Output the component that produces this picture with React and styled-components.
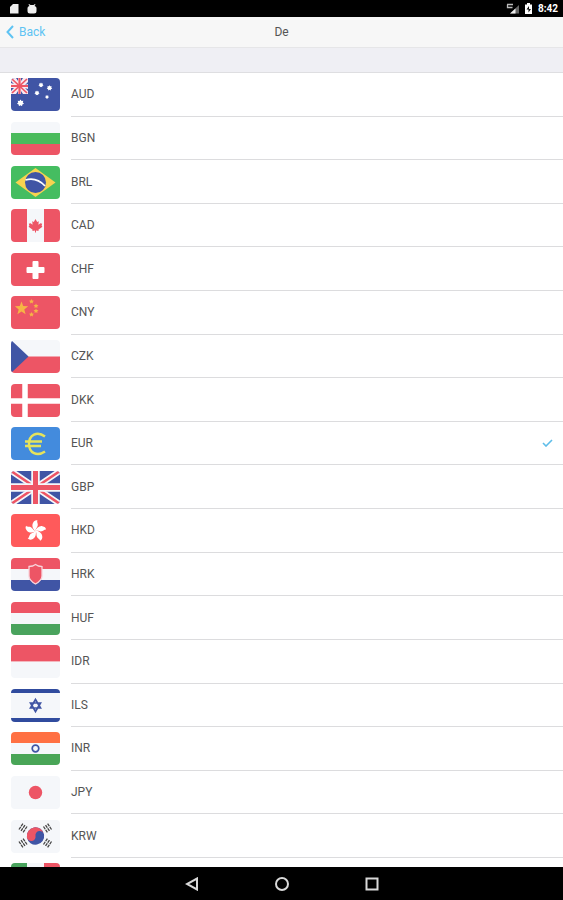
import { useId, useState } from "react";
import styled, { createGlobalStyle } from "styled-components";

const RED = "#ed5565";
const BLUE = "#4055a5";
const WHITE = "#f5f7fa";

const star = (cx, cy, r, inner = 0.42, points = 5) =>
	Array.from({ length: points * 2 }, (_, i) => {
		const radius = i % 2 ? r * inner : r;
		const angle = (Math.PI * i) / points - Math.PI / 2;
		return `${(cx + radius * Math.cos(angle)).toFixed(2)},${(
			cy +
			radius * Math.sin(angle)
		).toFixed(2)}`;
	}).join(" ");

const Stripes = ({ colors }) =>
	colors.map((color, i) => (
		<rect
			key={i}
			y={(33 / colors.length) * i}
			width='49'
			height={33 / colors.length + 0.3}
			fill={color}
		/>
	));

const artwork = {
	AUD: (
		<>
			<rect width='49' height='33' fill={BLUE} />
			<rect width='17' height='16' fill='#f8e8f0' />
			<path d='M5 0h2v3zM10 0h2l-2 3zM0 5v-2l3 3zM17 4v2l-3 1zM0 10l3 0-3 3zM17 11v2l-3-3zM5 16l2-3v3zM10 13l2 3h-2z' fill={BLUE} />
			<path d='M8.500 0v16M0 8h17' stroke={RED} strokeWidth='2.200' />
			<path d='M1 1l15 14M16 1L1 15' stroke={RED} strokeWidth='1.700' />
			<g fill='#fff'>
				<polygon points={star(9.5, 25, 3.6, 0.65, 7)} />
				<polygon points={star(30, 7, 2.6, 0.65, 7)} />
				<polygon points={star(38.5, 10, 2.8, 0.65, 7)} />
				<polygon points={star(26, 15, 2.6, 0.65, 7)} />
				<polygon points={star(36, 19, 2, 0.65, 7)} />
			</g>
		</>
	),
	BGN: <Stripes colors={[WHITE, "#4abb5c", RED]} />,
	BRL: (
		<>
			<rect width='49' height='33' fill='#45bd61' />
			<path d='M24.500 2L44.500 16.500 24.500 31 4.500 16.500z' fill='#f8d350' />
			<circle cx='24.5' cy='16.500' r='10.500' fill={BLUE} />
			<path d='M14.500 14c7-2 14 0 19.500 6' fill='none' stroke='#fff' strokeWidth='1.800' />
		</>
	),
	CAD: (
		<>
			<rect width='49' height='33' fill={WHITE} />
			<path d='M0 0h16v33H0zM33 0h16v33H33z' fill={RED} />
			<path d='M24.500 10l1.700 3 1.600-.7-.4 3.500 2-1.500 1.800.5-.6 2 .8 1-4 3 .2 1.200-2.600-.4v2h-1v-2l-2.600.4.200-1.200-4-3 .8-1-.6-2 1.800-.5 2 1.500-.4-3.500 1.600.7z' fill={RED} />
		</>
	),
	CHF: (
		<>
			<rect width='49' height='33' fill={RED} />
			<path d='M22.500 8h4q1 0 1 1v5h5q1 0 1 1v4q0 1-1 1h-5v5q0 1-1 1h-4q-1 0-1-1v-5h-5q-1 0-1-1v-4q0-1 1-1h5v-5q0-1 1-1z' fill='#fff' />
		</>
	),
	CNY: (
		<>
			<rect width='49' height='33' fill={RED} />
			<g fill='#f6b445'>
				<polygon points={star(10.5, 12.5, 7)} />
				<polygon points={star(20.5, 5.5, 2.6, 0.5)} />
				<polygon points={star(25, 10, 2.6, 0.5)} />
				<polygon points={star(25, 15, 2.6, 0.5)} />
				<polygon points={star(20.5, 18.5, 2.6, 0.5)} />
			</g>
		</>
	),
	CZK: (
		<>
			<Stripes colors={[WHITE, RED]} />
			<path d='M0 0l17.500 16.500L0 33z' fill={BLUE} />
		</>
	),
	DKK: (
		<>
			<rect width='49' height='33' fill={RED} />
			<path d='M14 0v33M0 17h49' stroke='#fff' strokeWidth='5.500' />
		</>
	),
	EUR: (
		<>
			<rect width='49' height='33' fill='#438bdd' />
			<path
				d='M34 9.500C26 3.500 18 8 18 17s8 13 16 7.500M14 14.500h17M14 19h16'
				fill='none'
				stroke='#e6e35b'
				strokeWidth='2.400'
			/>
		</>
	),
	GBP: (
		<>
			<rect width='49' height='33' fill={BLUE} />
			<path d='M0 0l49 33M49 0L0 33' stroke={WHITE} strokeWidth='6' />
			<path d='M0 0l49 33M49 0L0 33' stroke={RED} strokeWidth='2.500' />
			<path d='M24.500 0v33M0 16.500h49' stroke={WHITE} strokeWidth='8.500' />
			<path d='M24.500 0v33M0 16.500h49' stroke={RED} strokeWidth='5' />
		</>
	),
	HKD: (
		<>
			<rect width='49' height='33' fill='#ff5a5b' />
			{[0, 72, 144, 216, 288].map((angle) => (
				<path
					key={angle}
					transform={`rotate(${angle} 24.5 17)`}
					d='M24.500 17.500c-2.500-2.500-4-5.500-2.500-8.500 1-2 2.500-3 4.500-2.500-1 1.500.5 2.500.3 4.500-.2 2.500-2.300 3-2.300 6.500z'
					fill='#fff'
				/>
			))}
		</>
	),
	HRK: (
		<>
			<Stripes colors={[RED, WHITE, BLUE]} />
			<path
				d='M18 8.500l3.500-.5 3-1.500 3 1.500 3.500.5v9.500c0 4-3 6-6.500 8-3.500-2-6.500-4-6.500-8z'
				fill={RED}
				stroke='#f7d5dc'
				strokeWidth='1.300'
			/>
		</>
	),
	HUF: <Stripes colors={[RED, WHITE, "#49a35d"]} />,
	IDR: <Stripes colors={[RED, WHITE]} />,
	ILS: (
		<>
			<rect width='49' height='33' fill={WHITE} />
			<path d='M0 0h49v4H0zM0 29h49v4H0z' fill='#304b9e' />
			<path
				d='M24.500 10.500l5 8.500h-10zM24.500 22.500l5-8.500h-10z'
				fill='none'
				stroke={BLUE}
				strokeWidth='1.700'
			/>
		</>
	),
	INR: (
		<>
			<Stripes colors={["#ff7043", WHITE, "#49a557"]} />
			<circle cx='24.500' cy='16.500' r='3.300' fill='none' stroke={BLUE} strokeWidth='1.700' />
		</>
	),
	JPY: (
		<>
			<rect width='49' height='33' fill={WHITE} />
			<circle cx='24.500' cy='16.500' r='6.700' fill={RED} />
		</>
	),
	KRW: (
		<>
			<rect width='49' height='33' fill={WHITE} />
			<g transform='rotate(-10 24.5 16)'>
				<circle cx='24.500' cy='16' r='8.700' fill={BLUE} />
				<path d='M33.200 16a8.700 8.700 0 0 0-17.400 0 4.350 4.350 0 0 0 8.700 0 4.350 4.350 0 0 1 8.700 0z' fill={RED} />
			</g>
			{[
				[12, 8, -56],
				[36.5, 8, 56],
				[12, 23, 56],
				[36.5, 23, -56]
			].map(([x, y, angle]) => (
				<g key={`${x}-${y}`} transform={`translate(${x} ${y}) rotate(${angle})`}>
					<path d='M-3.500-2.500h7M-3.500 0h7M-3.500 2.500h7' stroke='#444' strokeWidth='1.300' />
					<path d='M0-3.500v7' stroke={WHITE} strokeWidth='.8' />
				</g>
			))}
		</>
	),
	MXN: (
		<>
			<rect width='49' height='33' fill={WHITE} />
			<path d='M0 0h16v33H0z' fill='#49a35d' />
			<path d='M33 0h16v33H33z' fill={RED} />
		</>
	)
};

const currencies = Object.keys(artwork).filter((code) => code !== "MXN");

const Flag = ({ code }) => {
	const id = useId();

	return (
		<FlagIcon viewBox='0 0 49 33' aria-hidden='true'>
			<clipPath id={id}>
				<rect width='49' height='33' rx='4' />
			</clipPath>
			<g clipPath={`url(#${id})`}>{artwork[code]}</g>
		</FlagIcon>
	);
};

const App = () => {
	const [selected, setSelected] = useState("EUR");

	return (
		<Screen>
			<GlobalStyle />
			<StatusBar>
				<svg width='32' height='12' viewBox='0 0 32 12' fill='#eee'>
					<path d='M4 1h5.500v9.500H1V4z' />
					<path d='M20 1l1.500 1h3L26 1l.5.500-1 1.500q2 .5 2 2v3q0 2.500-2.500 2.500h-4q-2.500 0-2.500-2.500V5q0-1.500 2-2l-1-1.500z' />
				</svg>
				<StatusRight>
					<svg width='28' height='12' viewBox='0 0 28 12'>
						<path d='M1 1.500h6M1.500 1.500v3h5' stroke='#bbb' strokeWidth='1.300' fill='none' />
						<path d='M4 10.500L13 2v8.500z' fill='#666' />
						<path d='M4 10.500L9.500 5.500v5z' fill='#eee' />
						<path d='M19 1.500h2V0h3v1.500h2V11h-7z' fill='#fff' />
						<path d='M23 3l-2.500 3.500h2V9.500L25 6h-2z' fill='#111' />
					</svg>
					<time>8:42</time>
				</StatusRight>
			</StatusBar>
			<Header>
				<BackButton type='button'>
					<svg width='8' height='14' viewBox='0 0 8 14' aria-hidden='true'>
						<path d='M7 1L1.500 7 7 13' fill='none' stroke='currentColor' strokeWidth='2' />
					</svg>
					Back
				</BackButton>
				<Title>De</Title>
			</Header>
			<Spacer />
			<List>
				{currencies.map((code) => (
					<Row key={code}>
						<Flag code={code} />
						<RowBody>
							{code}
							<Radio
								type='radio'
								name='currency'
								value={code}
								checked={selected === code}
								onChange={() => setSelected(code)}
							/>
							{selected === code && (
								<svg width='11' height='8' viewBox='0 0 11 8' aria-hidden='true'>
									<path d='M1 4l3 3 6-6' fill='none' stroke='#5dbde9' strokeWidth='1.600' />
								</svg>
							)}
						</RowBody>
					</Row>
				))}
				<Row as='div'>
					<Flag code='MXN' />
				</Row>
			</List>
			<NavBar>
				<NavButton type='button' aria-label='Back'>
					<svg width='14' height='14' viewBox='0 0 14 14'>
						<path d='M12 1.500v11L2 7z' />
					</svg>
				</NavButton>
				<NavButton type='button' aria-label='Home'>
					<svg width='14' height='14' viewBox='0 0 14 14'>
						<circle cx='7' cy='7' r='6' />
					</svg>
				</NavButton>
				<NavButton type='button' aria-label='Recent apps'>
					<svg width='14' height='14' viewBox='0 0 14 14'>
						<path d='M1.500 1.500h11v11h-11z' />
					</svg>
				</NavButton>
			</NavBar>
		</Screen>
	);
};

const GlobalStyle = createGlobalStyle`
	* {
		box-sizing: border-box;
	}

	body {
		margin: 0;
		background: #fff;
		color: #555;
		font-family: Roboto, "Liberation Sans", sans-serif;
		font-size: 12px;
	}
`;

const Screen = styled.div`
	display: flex;
	flex-direction: column;
	height: 100vh;
`;

const StatusBar = styled.div`
	display: flex;
	flex: none;
	align-items: center;
	justify-content: space-between;
	height: 17px;
	padding: 0 5px 0 9px;
	background: #000;
	color: #fff;
`;

const StatusRight = styled.div`
	display: flex;
	align-items: center;
	gap: 4px;
	font-size: 10px;
	font-weight: 700;
`;

const Header = styled.header`
	display: grid;
	flex: none;
	grid-template-columns: 1fr auto 1fr;
	align-items: center;
	height: 31px;
	padding: 0 6px;
	border-bottom: 1px solid #e6e6e8;
	background: #f7f7f7;
`;

const BackButton = styled.button`
	display: flex;
	align-items: center;
	justify-self: start;
	gap: 5px;
	padding: 0;
	border: 0;
	background: none;
	color: #5ec3f3;
	font: inherit;
	cursor: pointer;
`;

const Title = styled.h1`
	margin: 0;
	font-size: 12px;
	font-weight: 400;
`;

const Spacer = styled.div`
	flex: none;
	height: 25px;
	border-bottom: 1px solid #dedee1;
	background: #efeff4;
`;

const List = styled.div`
	display: grid;
	flex: 1;
	grid-template-rows: repeat(18, minmax(40px, 1fr)) 9px;
	min-height: 0;
	overflow: hidden;
`;

const Row = styled.label`
	display: flex;
	align-items: center;
	gap: 11px;
	min-height: 43px;
	padding-left: 11px;
	cursor: pointer;
`;

const FlagIcon = styled.svg`
	flex: none;
	width: 49px;
	height: 33px;
`;

const RowBody = styled.span`
	display: flex;
	flex: 1;
	align-items: center;
	justify-content: space-between;
	align-self: stretch;
	padding-right: 10px;
	border-bottom: 1px solid #dcdcde;
`;

const Radio = styled.input`
	appearance: none;
	width: 0;
	height: 0;
	margin: 0;
`;

const NavBar = styled.nav`
	display: flex;
	flex: none;
	align-items: center;
	justify-content: center;
	gap: 62px;
	height: 33px;
	background: #000;
`;

const NavButton = styled.button`
	display: flex;
	padding: 7px;
	border: 0;
	background: none;
	cursor: pointer;

	svg {
		fill: none;
		stroke: #d8d8d8;
		stroke-width: 2;
	}
`;

export default App;
